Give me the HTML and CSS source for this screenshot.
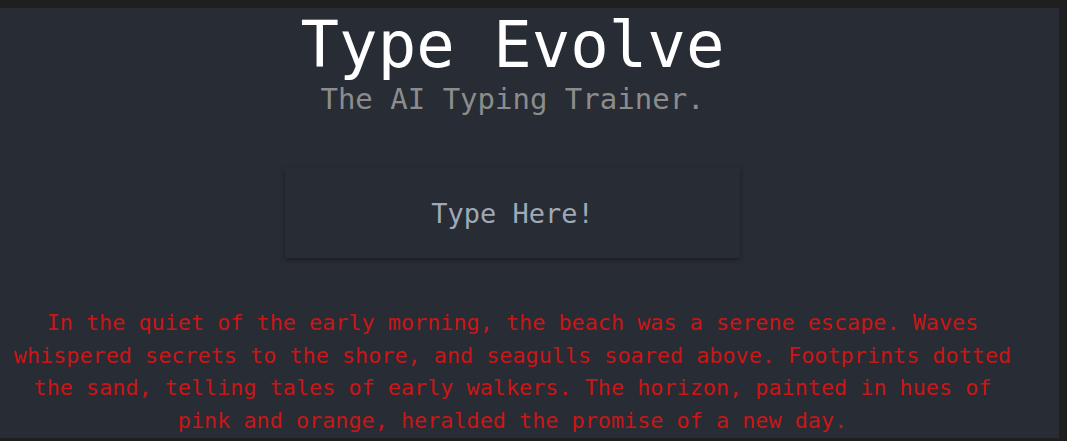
FILE: index.html
```html
<!DOCTYPE html>
<html lang="en">
<head>
<meta charset="utf-8">
<title>Type Evolve</title>
<link rel="stylesheet" href="styles.css">
</head>
<body>
<div class="app">
  <div class="column">
    <h1 class="title">Type Evolve</h1>
    <p class="subtitle">The AI Typing Trainer.</p>
    <div class="typebox">Type Here!</div>
    <p class="passage">In the quiet of the early morning, the beach was a serene escape. Waves whispered secrets to the shore, and seagulls soared above. Footprints dotted the sand, telling tales of early walkers. The horizon, painted in hues of pink and orange, heralded the promise of a new day.</p>
  </div>
</div>
</body>
</html>
```
FILE: styles.css
```css
html, body {
  margin: 0;
  padding: 0;
  background: #1f1f1f;
  overflow: hidden;
}
body {
  font-family: "DejaVu Sans Mono", "Liberation Mono", monospace;
  height: 441px;
}
.app {
  margin-top: 8px;
  width: 1059px;
  height: 430px;
  background: #282c34;
  overflow: hidden;
}
.column {
  width: 1025px;
  display: flex;
  flex-direction: column;
  align-items: center;
  text-align: center;
}
.title {
  margin: 0;
  font-size: 64px;
  font-weight: normal;
  color: #ffffff;
  line-height: 74px;
}
.subtitle {
  margin: 0;
  font-size: 29px;
  line-height: 35px;
  color: #8c8c8c;
}
.typebox {
  margin-top: 51px;
  width: 455px;
  height: 90px;
  display: flex;
  align-items: center;
  justify-content: center;
  font-size: 27px;
  color: #a0a9b8;
  background: #282c34;
  box-shadow: 0 2px 5px rgba(0, 0, 0, 0.35);
}
.passage {
  margin: 49px 0 0;
  max-width: 1010px;
  font-size: 21.8px;
  line-height: 32.6px;
  color: #c91616;
}
```
